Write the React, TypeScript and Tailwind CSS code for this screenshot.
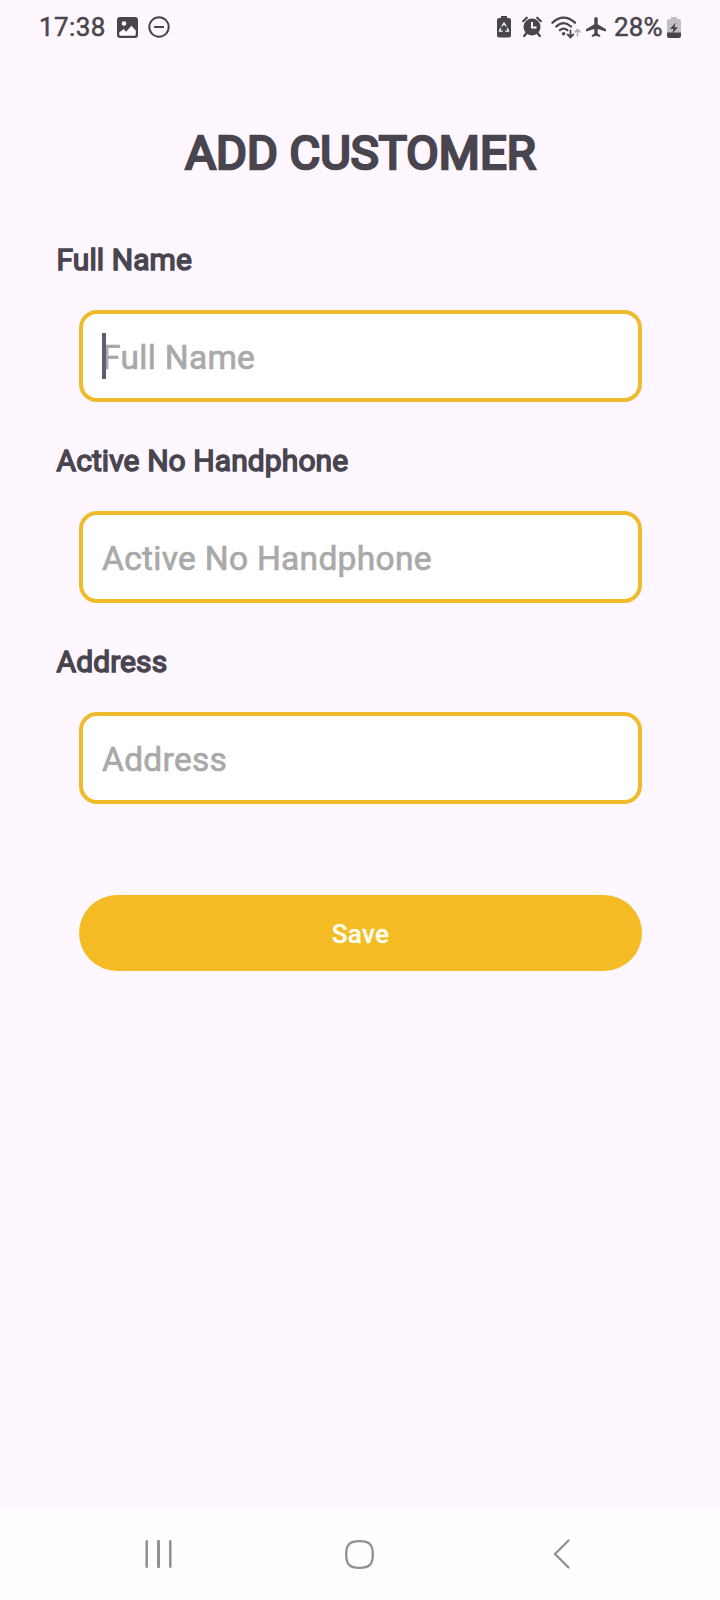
import React from "react";

function StatusBar() {
  return (
    <header className="flex h-[54px] shrink-0 items-center justify-between pl-[39px] pr-[39px] text-[#48464c]">
      <div className="flex items-center">
        <span className="w-[77.500px] text-[26px] font-normal leading-[54px] tracking-[0.4px] [-webkit-text-stroke:0.5px_#48464c]">17:38</span>
        <svg className="h-[21px] w-[21px]" viewBox="0 0 21 21" fill="currentColor">
          <path fillRule="evenodd" d="M3 0h15a3 3 0 0 1 3 3v15a3 3 0 0 1-3 3H3a3 3 0 0 1-3-3V3a3 3 0 0 1 3-3ZM7 4.200a2.300 2.300 0 1 0 0 4.600 2.300 2.300 0 0 0 0-4.600ZM2.200 15.500v1.800q0 1.400 1.400 1.400h13.800q1.400 0 1.400-1.400v-3.800l-4.400-4.800-5.200 6-2.600-2.700Z" />
        </svg>
        <svg className="ml-[10px] h-[22px] w-[22px]" viewBox="0 0 22 22" fill="none" stroke="currentColor" strokeWidth="2">
          <circle cx="11" cy="11" r="9.700" />
          <path d="M6 11h10" />
        </svg>
      </div>
      <div className="flex items-center">
        <svg className="h-[22px] w-[14px]" viewBox="0 0 14 22" fill="currentColor">
          <path d="M4 0h6v2h2a2 2 0 0 1 2 2v15.500a2 2 0 0 1-2 2H2a2 2 0 0 1-2-2V4a2 2 0 0 1 2-2h2Z" />
          <path d="m4.700 10.500 2.300-3.500 2.300 3.500M10.300 12l1.200 3.200H8.200M5.700 15.200H2.500L3.700 12" fill="none" stroke="#fef7ff" strokeWidth="1.300" />
        </svg>
        <svg className="ml-[11px] h-[22px] w-[20px]" viewBox="0 0 20 22" fill="currentColor">
          <circle cx="10" cy="11" r="8.500" />
          <path d="m1.200 5.200 3.600-3.500m14 3.500-3.600-3.500M4.500 17l-2.300 3M15.500 17l2.300 3" fill="none" stroke="currentColor" strokeWidth="2.200" strokeLinecap="round" />
          <path d="M10 6v5.500h4.500" fill="none" stroke="#fef7ff" strokeWidth="1.900" />
        </svg>
        <svg className="ml-[9px] h-[24px] w-[30px]" viewBox="0 0 30 24" fill="none" stroke="currentColor" strokeWidth="2.300" strokeLinecap="round">
          <path d="M1.500 7.700Q12.500-2.500 24 7.700M5.300 11.500q7.200-6.700 14.700 0M9 15.200q3.700-3.200 7.300 0" />
          <circle cx="12.600" cy="18.700" r="1.800" fill="currentColor" stroke="none" />
          <path d="M19.500 15.500v6.500m-2.800-2.500 2.800 2.900 2.800-2.900" strokeWidth="1.800" />
          <path d="M26.500 20.800v-6m-2.500 2.200 2.500-2.500 2.500 2.500" stroke="#aaa6ad" strokeWidth="1.500" />
        </svg>
        <svg className="ml-[5px] h-[20px] w-[20px]" viewBox="0 0 20 20" fill="currentColor">
          <path d="M8.300 1.800a1.700 1.700 0 0 1 3.400 0v5.400l8.300 5v2.300l-8.300-2.500v4.400l2.500 1.900V20l-4.200-1.200L5.800 20v-1.700l2.500-1.900V12L0 14.500v-2.300l8.300-5Z" />
        </svg>
        <span className="ml-[8px] w-[49px] whitespace-nowrap text-[26px] font-normal leading-[54px] tracking-[0.2px] [-webkit-text-stroke:0.5px_#48464c]">28%</span>
        <svg className="ml-[4px] h-[21px] w-[14px]" viewBox="0 0 14 21">
          <path d="M4 0h6v2h2a2 2 0 0 1 2 2v12H0V4a2 2 0 0 1 2-2h2Z" fill="#c3bec5" />
          <path d="M0 15.500h14V19a2 2 0 0 1-2 2H2a2 2 0 0 1-2-2Z" fill="currentColor" />
          <path d="M8.500 5.500 3 12h3.500L5 17l6-6.800H7.500Z" fill="currentColor" />
        </svg>
      </div>
    </header>
  );
}

function Field({ label, focused }: { label: string; focused?: boolean }) {
  return (
    <div className="flex h-[201px] flex-col">
      <label className="ml-[56.500px] h-[70px] text-[30px] font-normal leading-[40px] tracking-[0.08px] text-[#49454f] [-webkit-text-stroke:1.5px_#49454f]">
        {label}
      </label>
      <div className="relative ml-[79px] flex h-[92px] w-[563px] items-center rounded-[18px] border-4 border-[#efba2c] bg-white pl-[19px] text-[33.500px] font-normal text-[#a9a9a9]">
        <span className="mt-[4px] leading-[40px] tracking-[0.3px] [-webkit-text-stroke:0.7px_#a9a9a9]">{label}</span>
        {focused && <span className="absolute left-[19px] top-[19px] h-[46px] w-[4px] bg-[#625b71]" />}
      </div>
    </div>
  );
}

function NavigationBar() {
  return (
    <nav className="flex h-[90px] shrink-0 items-center bg-[#fefefe] pb-[2px] pl-[145px] text-[#919191]">
      <svg className="h-[28px] w-[27px]" viewBox="0 0 27 28" fill="none" stroke="currentColor" strokeLinecap="round">
        <path d="M1.700 1.300v25.400M25.300 1.300v25.400" strokeWidth="2.500" />
        <path d="M13.500 1.300v25.400" strokeWidth="3" />
      </svg>
      <svg className="ml-[173px] h-[29px] w-[29px]" viewBox="0 0 29 29" fill="none" stroke="currentColor" strokeWidth="2.300">
        <path d="M14.500 1.200C24.500 1.200 27.800 4.500 27.800 14.500S24.500 27.800 14.500 27.800 1.200 24.500 1.200 14.500 4.500 1.200 14.500 1.200Z" />
      </svg>
      <svg className="ml-[179px] h-[30px] w-[17px]" viewBox="0 0 17 30" fill="none" stroke="currentColor" strokeWidth="2.300" strokeLinecap="round">
        <path d="M15.500 1.500 2 15l13.500 13.500" />
      </svg>
    </nav>
  );
}

export default function App() {
  return (
    <div className="flex h-[1600px] w-[720px] flex-col overflow-hidden bg-[#fef7ff] font-[Roboto,sans-serif]">
      <StatusBar />
      <main className="flex flex-1 flex-col">
        <h1 className="mt-[69px] h-[117px] pl-[1px] text-center text-[47px] font-normal leading-[60px] tracking-[0.1px] text-[#49454f] [-webkit-text-stroke:2.700px_#49454f]">
          ADD CUSTOMER
        </h1>
        <Field label="Full Name" focused />
        <Field label="Active No Handphone" />
        <Field label="Address" />
        <button className="ml-[79px] mt-[52px] h-[76px] w-[563px] rounded-[38px] bg-[#f4bb24] pt-[2px] text-[26px] font-medium tracking-[0.3px] text-[#fffff0] [-webkit-text-stroke:0.3px_#fffff0]">
          Save
        </button>
      </main>
      <NavigationBar />
    </div>
  );
}
